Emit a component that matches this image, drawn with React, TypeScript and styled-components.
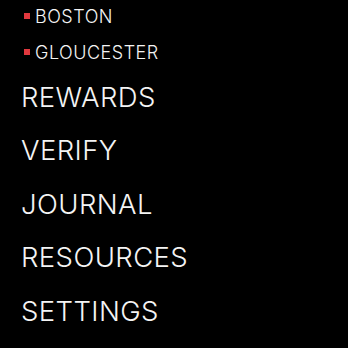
import styled, { createGlobalStyle } from "styled-components";

const GlobalStyle = createGlobalStyle`
  html, body {
    margin: 0;
    padding: 0;
    background: #000;
  }
  body {
    font-family: Inter, "Liberation Sans", sans-serif;
    color: #f4f4f4;
    -webkit-font-smoothing: antialiased;
  }
`;

const MenuStyle = styled.nav`
  width: 348px;
  height: 348px;
  background: #000;
  overflow: hidden;
  .locations {
    list-style: none;
    margin: -2px 0 0;
    padding: 0 0 0 24px;
    li {
      display: flex;
      align-items: center;
      gap: 5px;
      height: 36px;
      font-size: 18px;
      font-weight: 300;
      letter-spacing: 0.5px;
      &::before {
        content: "";
        width: 6px;
        height: 6px;
        background-color: #e0383e;
      }
    }
  }
  .main-links {
    list-style: none;
    margin: 0;
    padding: 0 0 0 21px;
    li {
      height: 53.5px;
      display: flex;
      align-items: center;
      font-size: 27.5px;
      font-weight: 300;
      letter-spacing: 0.4px;
    }
  }
`;

const locations = ["BOSTON", "GLOUCESTER"];
const links = ["REWARDS", "VERIFY", "JOURNAL", "RESOURCES", "SETTINGS"];

export default function App() {
  return (
    <>
      <GlobalStyle />
      <MenuStyle>
        <ul className="locations">
          {locations.map((l) => (
            <li key={l}>{l}</li>
          ))}
        </ul>
        <ul className="main-links">
          {links.map((l) => (
            <li key={l}>{l}</li>
          ))}
        </ul>
      </MenuStyle>
    </>
  );
}
